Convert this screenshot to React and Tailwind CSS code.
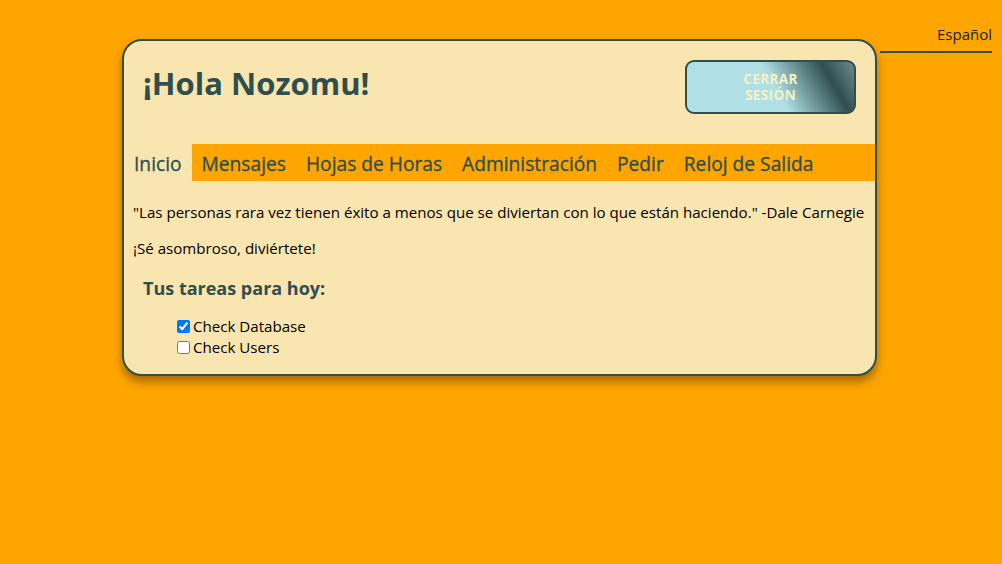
export default function App() {
  const tabs = ['Inicio', 'Mensajes', 'Hojas de Horas', 'Administración', 'Pedir', 'Reloj de Salida']

  return (
    <div className="relative min-h-[564px] bg-[#ffa500] pt-[39px] font-['Open_Sans',sans-serif] text-black">
      {/* Language */}
      <div className="absolute right-[10px] top-[24px] w-[112px] border-b-2 border-[#2f4f4f] pb-[7px] text-right text-[15px] leading-[20px] text-[#222]">
        Español
      </div>

      {/* Card */}
      <div className="relative ml-[122px] w-[755px] rounded-[20px] border-2 border-[#2f4f4f] bg-[#f9e5b0] pb-[16px] shadow-[0_6px_10px_rgba(0,0,0,0.35)]">
        {/* Header */}
        <div className="flex items-start justify-between pl-[19px] pr-[19px] pt-[19px]">
          <h1 className="-mt-[3px] text-[31px] font-bold leading-[52px] text-[#2f4f4f]">¡Hola Nozomu!</h1>
          <button className="flex h-[54px] w-[171px] flex-col items-center justify-center rounded-[9px] border-2 border-[#2f4f4f] bg-[linear-gradient(60deg,#b0e0e6_52%,#2f4f4f_83%,#6f8c8e)] text-[13.5px] font-bold leading-[16px] tracking-[0.4px] text-[#f6f1c4]">
            <span>CERRAR</span>
            <span>SESIÓN</span>
          </button>
        </div>

        {/* Tabs */}
        <nav className="mt-[30px] flex h-[37px] items-center bg-[#ffa500]">
          {tabs.map((t, i) => (
            <div
              key={t}
              className={`flex h-full items-center px-[10px] pt-[3px] text-[19.2px] text-[#2f4f4f] [-webkit-text-stroke:0.3px_#2f4f4f] ${i === 0 ? 'bg-[#f9e5b0]' : ''}`}
            >
              {t}
            </div>
          ))}
        </nav>

        {/* Content */}
        <div className="px-[9px] pt-[20px] text-[15.1px] leading-[22px]">
          <p>"Las personas rara vez tienen éxito a menos que se diviertan con lo que están haciendo." -Dale Carnegie</p>
          <p className="mt-[14px]">¡Sé asombroso, diviértete!</p>
          <h2 className="mt-[16px] pl-[10px] text-[18px] font-bold leading-[26px] text-[#2f4f4f]">Tus tareas para hoy:</h2>
          <div className="mt-[15px] pl-[44px]">
            <label className="flex items-center gap-[3px] leading-[21px]">
              <input type="checkbox" defaultChecked className="h-[13px] w-[13px] accent-[#0075ff]" />
              Check Database
            </label>
            <label className="flex items-center gap-[3px] leading-[21px]">
              <input type="checkbox" className="h-[13px] w-[13px]" />
              Check Users
            </label>
          </div>
        </div>
      </div>
    </div>
  )
}
